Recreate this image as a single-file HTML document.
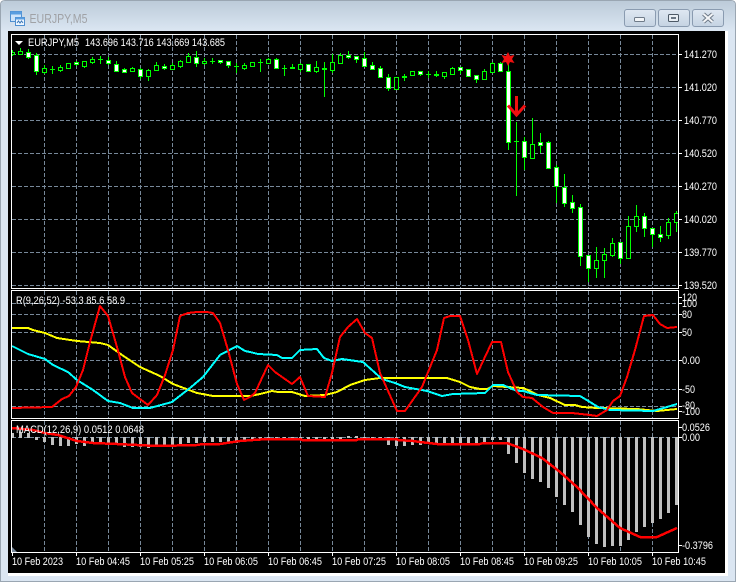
<!DOCTYPE html>
<html><head><meta charset="utf-8"><style>
html,body{margin:0;padding:0;background:#fff}
svg{display:block}
text{font-family:"Liberation Sans",sans-serif;font-size:11px;fill:#fff}
.c{shape-rendering:crispEdges}
</style></head><body>
<svg width="736" height="582" viewBox="0 0 736 582" xmlns="http://www.w3.org/2000/svg">
<defs>
<linearGradient id="tb" x1="0" y1="0" x2="0" y2="1"><stop offset="0" stop-color="#bccbd9"/><stop offset="1" stop-color="#dbe6f2"/></linearGradient>
<linearGradient id="btn" x1="0" y1="0" x2="0" y2="1"><stop offset="0" stop-color="#dfe8f2"/><stop offset="1" stop-color="#c5d3e2"/></linearGradient>
<clipPath id="m"><rect x="12" y="35" width="666" height="253"/></clipPath>
<clipPath id="r"><rect x="12" y="291" width="666" height="127"/></clipPath>
<clipPath id="d"><rect x="12" y="421" width="666" height="131"/></clipPath>
</defs>
<rect width="736" height="582" fill="#fff"/>
<path d="M5 0.5H731Q735.5 .5 735.5 5V581.5H.5V5Q.5 .5 5 .5Z" fill="#dbe6f2" stroke="#9aa6b2"/>
<path d="M5 1H731Q735 1 735 5V31H1V5Q1 1 5 1Z" fill="url(#tb)"/>
<rect x="8" y="31" width="720" height="545" fill="#fff"/>
<rect x="8" y="31" width="717" height="542" fill="#000"/>
<!-- title bar -->
<g>
<rect x="10.5" y="11.5" width="11" height="10" fill="#cfe4fa" stroke="#4f8fd0"/>
<rect x="10.5" y="11.5" width="11" height="3" fill="#5a9ee0"/>
<rect x="15.5" y="17.5" width="9" height="8" fill="#eef6ff" stroke="#4f8fd0"/>
<rect x="15.5" y="17.5" width="9" height="2" fill="#5a9ee0"/>
<path d="M17 23l1.5-2 1.5 2 1.5-2 1.5 2" fill="none" stroke="#3b78b8"/>
</g>
<text x="29.5" y="23" style="font-size:13px;fill:#a0a2a6" textLength="58" lengthAdjust="spacingAndGlyphs">EURJPY,M5</text>
<rect x="624.5" y="9.5" width="31" height="17" rx="2.5" fill="url(#btn)" stroke="#8a9bb0"/>
<rect x="658.5" y="9.5" width="31" height="17" rx="2.5" fill="url(#btn)" stroke="#8a9bb0"/>
<rect x="692.5" y="9.5" width="31" height="17" rx="2.5" fill="url(#btn)" stroke="#8a9bb0"/>
<rect x="634.5" y="17.5" width="10" height="4" rx="1" fill="#f2f5f8" stroke="#6e7a88"/>
<rect x="668.5" y="14.5" width="10" height="7" rx="1" fill="#e8eef4" stroke="#4d5966"/>
<rect x="671" y="17" width="5" height="2" fill="#6a7684"/>
<path d="M703.5 14l9 8M712.5 14l-9 8" stroke="#6e7a88" stroke-width="4" fill="none"/>
<path d="M703.5 14l9 8M712.5 14l-9 8" stroke="#f4f6f8" stroke-width="2" fill="none"/>

<!-- grid -->
<g class="c" stroke="#778899" fill="none" stroke-dasharray="4 2">
<path d="M44.5 35V288M76.5 35V288M108.5 35V288M140.5 35V288M172.5 35V288M204.5 35V288M236.5 35V288M268.5 35V288M300.5 35V288M332.5 35V288M364.5 35V288M396.5 35V288M428.5 35V288M460.5 35V288M492.5 35V288M524.5 35V288M556.5 35V288M588.5 35V288M620.5 35V288M652.5 35V288"/>
<path d="M12 54.5H678M12 87.5H678M12 120.5H678M12 153.5H678M12 186.5H678M12 219.5H678M12 252.5H678M12 285.5H678"/>
<path d="M44.5 291V418M76.5 291V418M108.5 291V418M140.5 291V418M172.5 291V418M204.5 291V418M236.5 291V418M268.5 291V418M300.5 291V418M332.5 291V418M364.5 291V418M396.5 291V418M428.5 291V418M460.5 291V418M492.5 291V418M524.5 291V418M556.5 291V418M588.5 291V418M620.5 291V418M652.5 291V418"/>
<path d="M12 303.5H678M12 314.5H678M12 332.5H678M12 360.5H678M12 389.5H678M12 406.5H678"/>
<path d="M44.5 421V552M76.5 421V552M108.5 421V552M140.5 421V552M172.5 421V552M204.5 421V552M236.5 421V552M268.5 421V552M300.5 421V552M332.5 421V552M364.5 421V552M396.5 421V552M428.5 421V552M460.5 421V552M492.5 421V552M524.5 421V552M556.5 421V552M588.5 421V552M620.5 421V552M652.5 421V552"/>
<path d="M12 437.5H678"/>
</g>

<!-- candles -->
<g clip-path="url(#m)" class="c">
<path fill="none" stroke="#0f0" d="M12.5 50V56M20.5 48V55M28.5 49V59M36.5 53V75M44.5 65V74M52.5 66V74M60.5 65V72M76.5 61V66M84.5 61V68M92.5 57V64M100.5 56V64M108.5 57V65M116.5 61V72M124.5 68V73M132.5 67V72M140.5 68V79M148.5 69V81M156.5 62V71M164.5 64V70M172.5 63V69M180.5 60V68M188.5 53V63M196.5 51V67M204.5 58V65M212.5 58V64M220.5 60V64M228.5 61V68M236.5 63V73M244.5 63V70M252.5 62V67M260.5 59V72M268.5 58V63M276.5 58V69M284.5 65V76M292.5 64V69M300.5 63V72M308.5 64V72M316.5 61V73M324.5 62V97M332.5 54V73M340.5 53V64M348.5 51V59M356.5 56V63M364.5 52V67M372.5 62V69M380.5 66V78M388.5 74V91M396.5 77V90M404.5 74V81M420.5 71V76M428.5 71V78M436.5 71V77M444.5 72V79M452.5 67V74M460.5 67V74M468.5 69V77M476.5 75V83M484.5 69V80M492.5 62V72M500.5 62V71M508.5 60V150M516.5 122V196M524.5 137V170M532.5 118V158M540.5 133V153M548.5 141V169M556.5 165V203M564.5 174V207M572.5 195V213M580.5 204V266M588.5 255V282M596.5 247V278M604.5 248V278M612.5 238V257M620.5 242V264M628.5 216V258M636.5 205V232M644.5 213V237M652.5 228V247M660.5 226V242M668.5 218V239M676.5 211V232M50 69.5H55M98 59.5H103M210 61.5H215M234 66.5H239M258 62.5H263M282 68.5H287M290 67.5H295M402 77.5H407M426 74.5H431M514 141.5H519"/>
<path fill="#0f0" d="M434 74h5v2h-5zM290 67h5v2h-5zM402 76h5v2h-5z"/>
<path fill="#000" stroke="#0f0" d="M10.5 52.5h4v2h-4zM18.5 51.5h4v3h-4zM42.5 68.5h4v4h-4zM58.5 67.5h4v3h-4zM66.5 63.5h4v5h-4zM82.5 61.5h4v5h-4zM90.5 59.5h4v3h-4zM130.5 68.5h4v3h-4zM146.5 70.5h4v6h-4zM154.5 65.5h4v5h-4zM170.5 65.5h4v4h-4zM178.5 61.5h4v5h-4zM186.5 56.5h4v6h-4zM202.5 61.5h4v2h-4zM242.5 65.5h4v3h-4zM250.5 62.5h4v4h-4zM266.5 59.5h4v4h-4zM298.5 64.5h4v5h-4zM314.5 67.5h4v4h-4zM330.5 62.5h4v8h-4zM338.5 55.5h4v8h-4zM394.5 77.5h4v12h-4zM410.5 71.5h4v4h-4zM442.5 72.5h4v4h-4zM450.5 68.5h4v6h-4zM482.5 71.5h4v8h-4zM490.5 63.5h4v9h-4zM530.5 144.5h4v14h-4zM594.5 260.5h4v8h-4zM602.5 254.5h4v6h-4zM610.5 243.5h4v12h-4zM626.5 226.5h4v32h-4zM634.5 216.5h4v10h-4zM666.5 222.5h4v13h-4zM674.5 213.5h4v9h-4z"/>
<path fill="#fff" stroke="#0f0" d="M26.5 52.5h4v5h-4zM34.5 55.5h4v16h-4zM74.5 62.5h4v2h-4zM106.5 60.5h4v3h-4zM114.5 64.5h4v7h-4zM122.5 69.5h4v3h-4zM138.5 69.5h4v7h-4zM162.5 66.5h4v2h-4zM194.5 57.5h4v6h-4zM218.5 60.5h4v2h-4zM226.5 61.5h4v4h-4zM274.5 59.5h4v9h-4zM306.5 64.5h4v7h-4zM322.5 68.5h4v1h-4zM346.5 55.5h4v2h-4zM354.5 56.5h4v3h-4zM362.5 58.5h4v8h-4zM370.5 65.5h4v4h-4zM378.5 68.5h4v9h-4zM386.5 77.5h4v11h-4zM418.5 71.5h4v3h-4zM458.5 67.5h4v3h-4zM466.5 69.5h4v7h-4zM474.5 75.5h4v4h-4zM498.5 63.5h4v8h-4zM506.5 71.5h4v71h-4zM522.5 141.5h4v16h-4zM538.5 142.5h4v3h-4zM546.5 142.5h4v26h-4zM554.5 167.5h4v19h-4zM562.5 187.5h4v16h-4zM570.5 202.5h4v6h-4zM578.5 207.5h4v49h-4zM586.5 255.5h4v13h-4zM618.5 242.5h4v16h-4zM642.5 216.5h4v12h-4zM650.5 228.5h4v6h-4zM658.5 234.5h4v3h-4z"/>
</g>
<!-- star + arrow -->
<path d="M508 52l2 4 4.500-1-2.500 4 2.500 4-4.500-1-2 4-2-4-4.500 1 2.500-4-2.500-4 4.500 1z" fill="#f01010"/>
<path d="M516.500 96V114" stroke="#f01010" stroke-width="3" fill="none"/>
<path d="M508 105.500l8.500 9.500 8.500-9.500" stroke="#f01010" stroke-width="3" fill="none"/>

<!-- oscillator -->
<g clip-path="url(#r)" fill="none" stroke-width="2" stroke-linejoin="round" class="c">
<polyline stroke="#ff0" points="12,328 28,328 33,330 45,333 57,338 77,341 100,343 108,345 122,355 140,367 160,376 173,384 197,393 213,396 250,396 260,394 272,391 278,392 292,392 305,396 325,395 337,392 350,385 365,380 380,378 413,378 447,378 460,382 470,387 480,389 487,389 493,386 507,387 523,388 530,391 538,395 550,398 565,405 575,405 582,407 597,408 637,409 657,411 677,409"/>
<polyline stroke="#0ff" points="12,346 28,354 45,359 53,365 68,372 77,380 93,390 108,401 120,403 133,408 150,408 172,402 190,388 203,377 220,355 237,346 245,351 250,352 258,354 277,355 282,358 292,358 300,350 317,349 324,358 332,361 342,359 363,362 382,379 395,383 405,387 427,391 442,396 453,394 485,393 493,385 503,385 517,391 523,391 537,395 580,396 590,402 598,407 610,410 653,411 667,407 677,404"/>
<polyline stroke="#f00" points="12,408 52,407 62,399 69,396 76,387 83,370 90,342 100,306 108,316 117,347 125,377 132,393 148,405 157,395 165,375 173,350 180,316 188,313 197,312 207,312 213,313 220,323 228,350 237,384 244,400 250,397 255,393 268,365 275,372 292,384 300,377 308,396 325,397 332,373 340,337 348,327 357,319 365,333 372,338 380,373 397,411 405,411 422,387 437,350 444,318 450,316 460,316 468,340 477,374 492,342 501,342 508,372 517,392 523,397 532,398 543,407 553,413 572,413 590,415 597,416 607,410 613,401 620,396 627,377 635,350 644,316 653,315 660,324 667,328 677,327"/>
</g>

<!-- MACD -->
<g clip-path="url(#d)">
<path class="c" fill="#c0c0c0" d="M11 433h3v5h-3zM19 432h3v6h-3zM27 433h3v5h-3zM35 437h3v3h-3zM43 437h3v5h-3zM51 437h3v8h-3zM59 437h3v9h-3zM67 437h3v9h-3zM75 437h3v7h-3zM83 437h3v9h-3zM91 437h3v7h-3zM99 437h3v7h-3zM107 437h3v7h-3zM115 437h3v7h-3zM123 437h3v10h-3zM131 437h3v10h-3zM139 437h3v10h-3zM147 437h3v11h-3zM155 437h3v10h-3zM163 437h3v8h-3zM171 437h3v8h-3zM179 437h3v8h-3zM187 437h3v6h-3zM195 437h3v6h-3zM203 437h3v5h-3zM211 437h3v5h-3zM219 437h3v5h-3zM227 437h3v6h-3zM235 437h3v6h-3zM243 437h3v5h-3zM251 437h3v3h-3zM259 437h3v3h-3zM267 437h3v3h-3zM275 437h3v3h-3zM283 437h3v3h-3zM291 437h3v3h-3zM299 437h3v3h-3zM307 437h3v3h-3zM315 437h3v3h-3zM323 437h3v3h-3zM331 437h3v2h-3zM339 437h3v2h-3zM347 436h3v2h-3zM355 436h3v2h-3zM363 437h3v2h-3zM371 437h3v2h-3zM379 437h3v3h-3zM387 437h3v8h-3zM395 437h3v9h-3zM403 437h3v9h-3zM411 437h3v8h-3zM419 437h3v8h-3zM427 437h3v7h-3zM435 437h3v8h-3zM443 437h3v7h-3zM451 437h3v7h-3zM459 437h3v7h-3zM467 437h3v7h-3zM475 437h3v7h-3zM483 437h3v6h-3zM491 437h3v3h-3zM499 437h3v3h-3zM507 437h3v17h-3zM515 437h3v26h-3zM523 437h3v36h-3zM531 437h3v42h-3zM539 437h3v45h-3zM547 437h3v51h-3zM555 437h3v60h-3zM563 437h3v68h-3zM571 437h3v75h-3zM579 437h3v88h-3zM587 437h3v100h-3zM595 437h3v107h-3zM603 437h3v110h-3zM611 437h3v109h-3zM619 437h3v109h-3zM627 437h3v103h-3zM635 437h3v95h-3zM643 437h3v90h-3zM651 437h3v86h-3zM659 437h3v82h-3zM667 437h3v76h-3zM675 437h3v68h-3z"/>
<polyline class="c" fill="none" stroke="#f00" stroke-width="2.500" stroke-linejoin="round" points="12,428 33,430 45,433 58,435 77,441 93,443 117,444 157,446 197,445 203,444 220,444 233,442 240,441 253,440 268,439 300,439 302,440 357,440 358,439 397,439 398,440 413,441 420,442 437,444 480,444 483,443 507,443 523,449 542,458 560,472 577,487 597,508 620,528 640,537 657,537 677,528"/>
</g>
<path d="M12 547l5 5h-5z" fill="#778899"/>

<!-- frames -->
<g class="c" fill="none" stroke="#fff">
<rect x="11.500" y="34.500" width="667" height="254"/>
<rect x="11.500" y="290.500" width="667" height="128"/>
<rect x="11.500" y="420.500" width="667" height="132"/>
<path d="M679 54.500h3M679 87.500h3M679 120.500h3M679 153.500h3M679 186.500h3M679 219.500h3M679 252.500h3M679 285.500h3M679 297.500h3M679 303.500h3M679 314.500h3M679 332.500h3M679 360.500h3M679 389.500h3M679 406.500h3M679 411.500h3M679 427.500h3M679 437.500h3M679 545.500h3"/>
<path d="M12.500 553v3M76.500 553v3M140.500 553v3M204.500 553v3M268.500 553v3M332.500 553v3M396.500 553v3M460.500 553v3M524.500 553v3M588.500 553v3M652.500 553v3"/>
</g>

<!-- legends -->
<path d="M15 41h8l-4 4z" fill="#fff"/>
<text x="28" y="46" textLength="51" lengthAdjust="spacingAndGlyphs">EURJPY,M5</text>
<text x="85" y="46" textLength="140" lengthAdjust="spacingAndGlyphs">143.696 143.716 143.669 143.685</text>
<text x="16" y="304" textLength="109" lengthAdjust="spacingAndGlyphs">R(9,26,52) -53.3 85.6 58.9</text>
<text x="16" y="433" textLength="128" lengthAdjust="spacingAndGlyphs">MACD(12,26,9) 0.0512 0.0648</text>

<!-- price axis -->
<text x="684" y="58" textLength="33" lengthAdjust="spacingAndGlyphs">141.270</text>
<text x="684" y="91" textLength="33" lengthAdjust="spacingAndGlyphs">141.020</text>
<text x="684" y="124" textLength="33" lengthAdjust="spacingAndGlyphs">140.770</text>
<text x="684" y="157" textLength="33" lengthAdjust="spacingAndGlyphs">140.520</text>
<text x="684" y="190" textLength="33" lengthAdjust="spacingAndGlyphs">140.270</text>
<text x="684" y="223" textLength="33" lengthAdjust="spacingAndGlyphs">140.020</text>
<text x="684" y="256" textLength="33" lengthAdjust="spacingAndGlyphs">139.770</text>
<text x="684" y="289" textLength="33" lengthAdjust="spacingAndGlyphs">139.520</text>
<text x="682" y="301" textLength="15" lengthAdjust="spacingAndGlyphs">120</text>
<text x="682" y="307" textLength="15" lengthAdjust="spacingAndGlyphs">100</text>
<text x="682" y="318" textLength="10" lengthAdjust="spacingAndGlyphs">80</text>
<text x="682" y="336" textLength="10" lengthAdjust="spacingAndGlyphs">50</text>
<text x="682" y="364" textLength="18" lengthAdjust="spacingAndGlyphs">0.00</text>
<text x="682" y="393" textLength="13" lengthAdjust="spacingAndGlyphs">-50</text>
<text x="682" y="409" textLength="13" lengthAdjust="spacingAndGlyphs">-80</text>
<text x="682" y="415" textLength="18" lengthAdjust="spacingAndGlyphs">-100</text>
<text x="682" y="431" textLength="28" lengthAdjust="spacingAndGlyphs">0.0526</text>
<text x="682" y="441" textLength="18" lengthAdjust="spacingAndGlyphs">0.00</text>
<text x="682" y="549" textLength="31" lengthAdjust="spacingAndGlyphs">-0.3796</text>

<!-- time axis -->
<text x="12" y="565" textLength="51" lengthAdjust="spacingAndGlyphs">10 Feb 2023</text>
<text x="76" y="565" textLength="54" lengthAdjust="spacingAndGlyphs">10 Feb 04:45</text>
<text x="140" y="565" textLength="54" lengthAdjust="spacingAndGlyphs">10 Feb 05:25</text>
<text x="204" y="565" textLength="54" lengthAdjust="spacingAndGlyphs">10 Feb 06:05</text>
<text x="268" y="565" textLength="54" lengthAdjust="spacingAndGlyphs">10 Feb 06:45</text>
<text x="332" y="565" textLength="54" lengthAdjust="spacingAndGlyphs">10 Feb 07:25</text>
<text x="396" y="565" textLength="54" lengthAdjust="spacingAndGlyphs">10 Feb 08:05</text>
<text x="460" y="565" textLength="54" lengthAdjust="spacingAndGlyphs">10 Feb 08:45</text>
<text x="524" y="565" textLength="54" lengthAdjust="spacingAndGlyphs">10 Feb 09:25</text>
<text x="588" y="565" textLength="54" lengthAdjust="spacingAndGlyphs">10 Feb 10:05</text>
<text x="652" y="565" textLength="54" lengthAdjust="spacingAndGlyphs">10 Feb 10:45</text>
</svg>
</body></html>
